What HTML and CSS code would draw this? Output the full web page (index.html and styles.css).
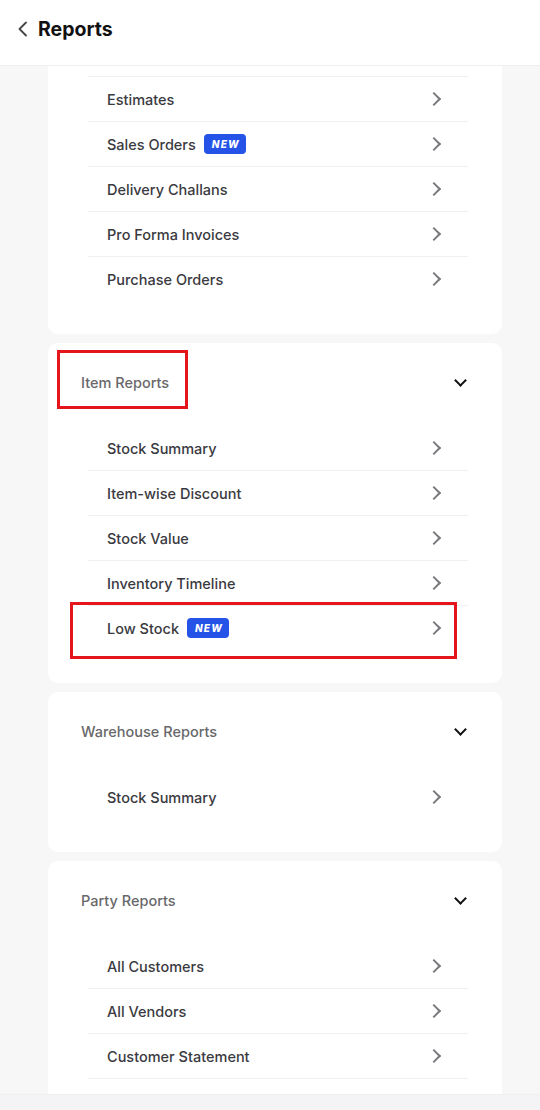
FILE: index.html
```html
<!DOCTYPE html>
<html lang="en">
<head>
  <meta charset="UTF-8" />
  <meta name="viewport" content="width=device-width, initial-scale=1.0"/>
  <title>Reports</title>
  <link rel="stylesheet" href="styles.css">
</head>
<body>
  <div class="app">
    <!-- Kopfzeile -->
    <header class="top-bar">
      <svg class="back-icon" width="12" height="16" viewBox="0 0 12 16">
        <path d="M9 1.5 L2.5 8 L9 14.5" fill="none" stroke="#444" stroke-width="1.8" stroke-linecap="round" stroke-linejoin="round"/>
      </svg>
      <h1 class="page-title">Reports</h1>
    </header>

    <main class="content">
      <!-- Transaktionsberichte (oben abgeschnitten) -->
      <section class="card card-first">
        <div class="row"><span class="row-label">Estimates</span><span class="chev-right"></span></div>
        <div class="row"><span class="row-label">Sales Orders</span><span class="badge">NEW</span><span class="chev-right"></span></div>
        <div class="row"><span class="row-label">Delivery Challans</span><span class="chev-right"></span></div>
        <div class="row"><span class="row-label">Pro Forma Invoices</span><span class="chev-right"></span></div>
        <div class="row"><span class="row-label">Purchase Orders</span><span class="chev-right"></span></div>
      </section>

      <section class="card">
        <div class="card-head">
          <span class="card-title">Item Reports</span>
          <span class="chev-down"></span>
          <div class="highlight highlight-title"></div>
        </div>
        <div class="row"><span class="row-label">Stock Summary</span><span class="chev-right"></span></div>
        <div class="row"><span class="row-label">Item-wise Discount</span><span class="chev-right"></span></div>
        <div class="row"><span class="row-label">Stock Value</span><span class="chev-right"></span></div>
        <div class="row"><span class="row-label">Inventory Timeline</span><span class="chev-right"></span></div>
        <div class="row">
          <span class="row-label">Low Stock</span><span class="badge">NEW</span><span class="chev-right"></span>
          <div class="highlight highlight-row"></div>
        </div>
      </section>

      <section class="card">
        <div class="card-head">
          <span class="card-title">Warehouse Reports</span>
          <span class="chev-down"></span>
        </div>
        <div class="row"><span class="row-label">Stock Summary</span><span class="chev-right"></span></div>
      </section>

      <section class="card">
        <div class="card-head">
          <span class="card-title">Party Reports</span>
          <span class="chev-down"></span>
        </div>
        <div class="row"><span class="row-label">All Customers</span><span class="chev-right"></span></div>
        <div class="row"><span class="row-label">All Vendors</span><span class="chev-right"></span></div>
        <div class="row"><span class="row-label">Customer Statement</span><span class="chev-right"></span></div>
        <!-- nächste Zeile liegt unter der unteren Leiste -->
        <div class="row"><span class="row-label"></span><span class="chev-right"></span></div>
      </section>
    </main>

    <footer class="bottom-bar"></footer>
  </div>
</body>
</html>
```

FILE: styles.css
```css
:root {
  --bg: #f7f7f7;
  --card: #ffffff;
  --line: #f0f0f0;
  --text: #3a3a3f;
  --muted: #68686b;
  --blue: #2553e8;
  --red: #e4161c;
}

html, body {
  margin: 0;
  padding: 0;
  width: 100%;
  height: 100%;
  overflow: hidden;
}
body {
  font-family: Inter, "Noto Sans", Arial, sans-serif;
  background-color: var(--bg);
  color: var(--text);
}

.app {
  display: flex;
  flex-direction: column;
  height: 100vh;
}

/* Kopfzeile */
.top-bar {
  flex: 0 0 66px;
  display: flex;
  align-items: center;
  gap: 9px;
  padding: 0 0 8px 17px;
  box-sizing: border-box;
  background: var(--card);
  border-bottom: 1px solid #eeeeee;
  position: relative;
  z-index: 2;
}
.back-icon {
  display: block;
}
.page-title {
  margin: 0;
  font-size: 19.5px;
  font-weight: 700;
  color: #111111;
}

/* Inhalt */
.content {
  flex: 1;
  overflow: hidden;
  display: flex;
  flex-direction: column;
  gap: 9px;
  padding: 0 38px 0 48px;
}

.card {
  position: relative;
  background: var(--card);
  border-radius: 10px;
  padding: 20px 34px 33px 40px;
  flex-shrink: 0;
}
.card-first {
  padding-top: 10px;
  border-radius: 0 0 10px 10px;
}

.card-head {
  position: relative;
  display: flex;
  align-items: center;
  justify-content: space-between;
  height: 38px;
  margin: 0 2px 25px -7px;
}
.card-title {
  font-size: 14.5px;
  font-weight: 500;
  color: var(--muted);
}

.row {
  position: relative;
  display: flex;
  align-items: center;
  height: 44px;
  padding: 0 26px 0 19px;
  border-top: 1px solid var(--line);
}
.card-head + .row {
  border-top: none;
}
.row-label {
  font-size: 14.5px;
  font-weight: 500;
  color: var(--text);
}

.badge {
  margin-left: 8px;
  background: var(--blue);
  color: #ffffff;
  font-size: 10px;
  font-weight: 800;
  font-style: italic;
  letter-spacing: 1.2px;
  padding: 3px 6px 3px 8px;
  border-radius: 4px;
  line-height: 14px;
}

/* Pfeile als CSS-Formen */
.chev-right {
  margin-left: auto;
  width: 8px;
  height: 8px;
  border-top: 2px solid #7a7a7e;
  border-right: 2px solid #7a7a7e;
  transform: rotate(45deg);
  margin-right: 3px;
}
.chev-down {
  width: 7px;
  height: 7px;
  border-right: 2px solid #111111;
  border-bottom: 2px solid #111111;
  transform: rotate(45deg);
  margin: -3px 1px 0 0;
}

/* Rote Markierungen */
.highlight {
  position: absolute;
  border: 3px solid var(--red);
  box-sizing: border-box;
  pointer-events: none;
}
.highlight-title {
  left: -24px;
  top: -13px;
  width: 131px;
  height: 59px;
}
.highlight-row {
  left: -18px;
  top: -4px;
  width: 387px;
  height: 57px;
}

.bottom-bar {
  flex: 0 0 15px;
  background: #f4f4f6;
  border-top: 1px solid #efeff1;
  position: relative;
  z-index: 2;
}
```
